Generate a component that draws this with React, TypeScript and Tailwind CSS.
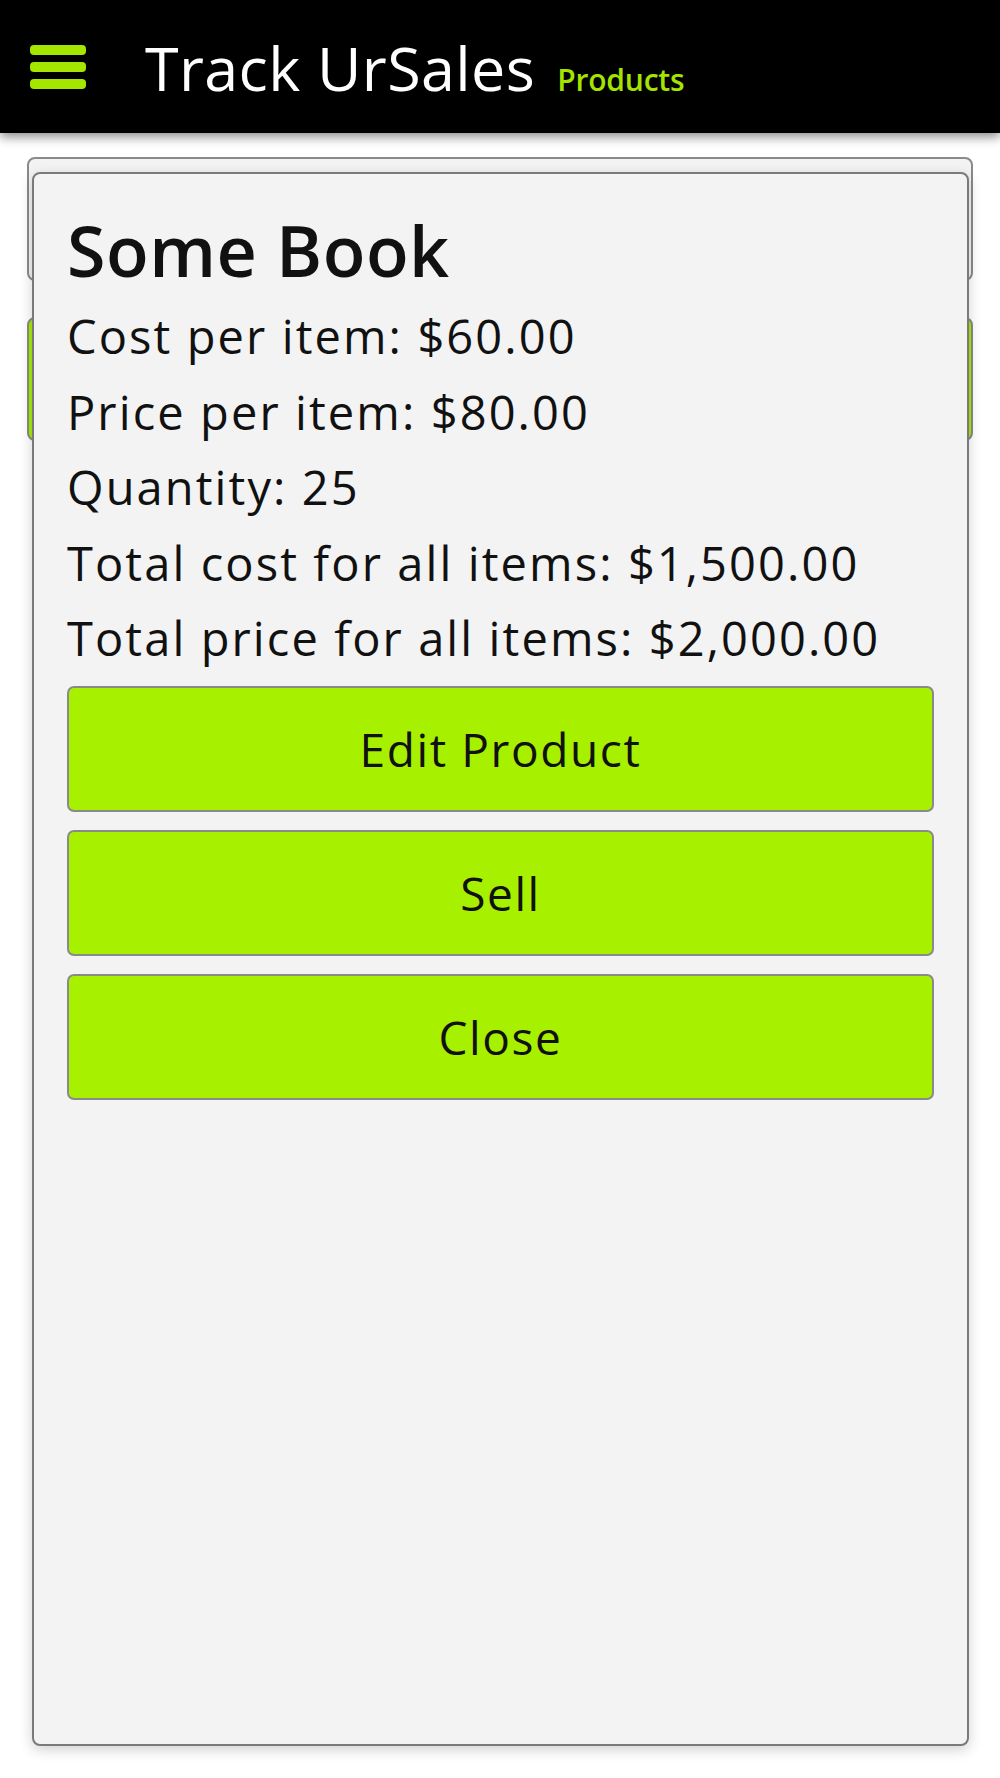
import React from "react";

const font = { fontFamily: '"Open Sans", "Noto Sans", sans-serif' };

function Hamburger() {
  return (
    <div className="flex w-[56px] flex-col gap-[7px]">
      <div className="h-[10px] w-full rounded-[4px] bg-[#a4e600]" />
      <div className="h-[10px] w-full rounded-[4px] bg-[#a4e600]" />
      <div className="h-[10px] w-full rounded-[4px] bg-[#a4e600]" />
    </div>
  );
}

function ActionButton({ label }: { label: string }) {
  return (
    <button className="flex h-[126px] w-full items-center justify-center rounded-[7px] border-2 border-[#8a8a8a] bg-[#a6f000] text-[46px] leading-none tracking-[1.6px] text-[#111]">
      {label}
    </button>
  );
}

export default function App() {
  const lines = [
    "Cost per item: $60.00",
    "Price per item: $80.00",
    "Quantity: 25",
    "Total cost for all items: $1,500.00",
    "Total price for all items: $2,000.00",
  ];
  return (
    <div className="relative h-[1778px] w-[1000px] overflow-hidden bg-white" style={font}>
      <header className="relative z-10 flex h-[133px] items-center bg-black pl-[30px] shadow-[0_4px_10px_rgba(0,0,0,0.45)]">
        <Hamburger />
        <div className="ml-[59px] flex items-baseline pt-[2px]">
          <span className="text-[61px] leading-none tracking-[0.4px] text-white">Track UrSales</span>
          <span className="ml-[22px] text-[30px] font-semibold leading-none tracking-[-0.2px] text-[#a4e400]">Products</span>
        </div>
      </header>

      <main className="flex flex-col gap-[36px] px-[27px] pt-[24px]">
        <div className="h-[124px] rounded-[8px] border-2 border-[#8a8a8a] bg-[#f3f3f3]" />
        <div className="h-[124px] rounded-[8px] border-2 border-[#8a8a8a] bg-[#a6f000]" />
      </main>

      <div className="absolute left-[32px] right-[31px] top-[172px] z-20 flex h-[1574px] flex-col rounded-[8px] border-2 border-[#7a7a7a] bg-[#f3f3f3] px-[33px] pt-[36px] shadow-[0_4px_14px_rgba(0,0,0,0.18)]">
        <h1 className="text-[70px] font-semibold leading-[80px] tracking-[0.5px] text-[#111]">Some Book</h1>
        <div className="mt-[9px] flex flex-col">
          {lines.map((l) => (
            <p key={l} className="text-[47px] leading-[75.6px] tracking-[2.1px] text-[#111]">
              {l}
            </p>
          ))}
        </div>
        <div className="mt-[9px] flex flex-col gap-[18px]">
          <ActionButton label="Edit Product" />
          <ActionButton label="Sell" />
          <ActionButton label="Close" />
        </div>
      </div>
    </div>
  );
}
